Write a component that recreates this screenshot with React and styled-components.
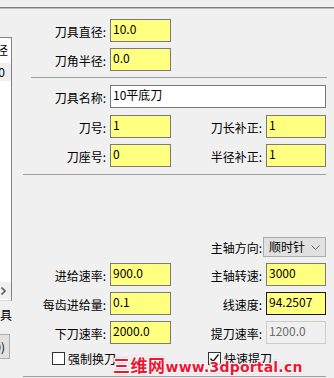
import React from 'react'
import styled, {createGlobalStyle} from 'styled-components'

const GlobalStyle = createGlobalStyle`
  body {
    margin: 0;
    background: #f0f0f0;
    font-family: "Noto Sans CJK SC", "Noto Sans", sans-serif;
    font-size: 12px;
  }
`

const leftFields = [
  {label: '进给速率:', value: '900.0'},
  {label: '每齿进给量:', value: '0.1'},
  {label: '下刀速率:', value: '2000.0'},
]

const rightFields = [
  {label: '主轴转速:', value: '3000'},
  {label: '线速度:', value: '94.2507', focus: true},
  {label: '提刀速率:', value: '1200.0', disabled: true},
]

const Chevron = ({dir = 'down'}) =>
  dir === 'down' ? (
    <svg width="9" height="5" viewBox="0 0 9 5">
      <polyline points="0.5,0.5 4.5,4.5 8.5,0.5" fill="none" stroke="#606060" strokeWidth="1" />
    </svg>
  ) : (
    <svg width="5" height="8" viewBox="0 0 5 8">
      <polyline points="0.5,0.5 4,4 0.5,7.5" fill="none" stroke="#606060" strokeWidth="1.6" />
    </svg>
  )

const Check = () => (
  <svg width="11" height="11" viewBox="0 0 11 11">
    <polyline points="1.5,5.5 4,8.5 9.5,1.5" fill="none" stroke="#111" strokeWidth="1.4" />
  </svg>
)

const App = () => {
  return (
    <Page>
      <GlobalStyle />
      <TopRule />
      <Body>
        <Side>
          <ListBox>
            <ListItem>刀具直径</ListItem>
            <ListItem selected>10.0</ListItem>
            <ListFill />
            <HScroll>
              <Chevron dir="right" />
            </HScroll>
          </ListBox>
          <SideLabel>刀具</SideLabel>
          <SideButton>(0)</SideButton>
        </Side>

        <Main>
          <Row $top={10}>
            <Label>刀具直径:</Label>
            <Field $w={61} defaultValue="10.0" />
          </Row>
          <Row $top={6}>
            <Label>刀角半径:</Label>
            <Field $w={61} defaultValue="0.0" />
          </Row>
          <Rule $top={6} $left={19} $right={7} />
          <Row $top={7}>
            <Label>刀具名称:</Label>
            <Field $w={216} $plain defaultValue="10平底刀" />
          </Row>
          <Row $top={7}>
            <Label>刀号:</Label>
            <Field $w={61} defaultValue="1" />
            <RightLabel>刀长补正:</RightLabel>
            <Field $w={60} defaultValue="1" />
          </Row>
          <Row $top={6}>
            <Label>刀座号:</Label>
            <Field $w={61} defaultValue="0" />
            <RightLabel>半径补正:</RightLabel>
            <Field $w={60} defaultValue="1" />
          </Row>
          <Rule $top={7} $left={11} $right={8} />

          <Row $top={62} $h={20}>
            <Gap />
            <SelectLabel>主轴方向:</SelectLabel>
            <Select>
              <span>顺时针</span>
              <Chevron />
            </Select>
          </Row>
          {leftFields.map((f, i) => (
            <Row key={f.label} $top={6}>
              <Label>{f.label}</Label>
              <Field $w={61} defaultValue={f.value} />
              <RightLabel>{rightFields[i].label}</RightLabel>
              <Field
                $w={60}
                $focus={rightFields[i].focus}
                $disabled={rightFields[i].disabled}
                defaultValue={rightFields[i].value}
              />
            </Row>
          ))}
          <CheckRow>
            <CheckItem>
              <Box />
              强制换刀
            </CheckItem>
            <CheckItem>
              <Box>
                <Check />
              </Box>
              快速提刀
            </CheckItem>
          </CheckRow>
          <Rule $top={11} $left={11} $right={8} />
        </Main>
      </Body>
      <Watermark>
        <WmCjk>三维网</WmCjk>
        <WmLatin>www.3dportal.cn</WmLatin>
      </Watermark>
    </Page>
  )
}

const Page = styled.div`
  position: relative;
  width: 334px;
  height: 378px;
  overflow: hidden;
  background: #f0f0f0;
  color: #000;
`

const TopRule = styled.div`
  margin-top: 7px;
  height: 0;
  border-top: 1px solid #7f7f7f;
  border-bottom: 1px solid #bcbcbc;
`

const Body = styled.div`
  display: flex;
`

const Side = styled.div`
  width: 12px;
  flex-shrink: 0;
  display: flex;
  flex-direction: column;
  overflow: hidden;
`

const ListBox = styled.div`
  margin-top: 28px;
  height: 262px;
  display: flex;
  flex-direction: column;
  background: #fff;
  border-top: 1px solid #828282;
  border-right: 1px solid #828282;
  border-bottom: 1px solid #d9d9d9;
`

const ListItem = styled.div`
  height: ${p => (p.selected ? 18 : 22)}px;
  margin-top: ${p => (p.selected ? 1 : 2)}px;
  padding-right: ${p => (p.selected ? 6 : 3)}px;
  background: ${p => (p.selected ? '#f0f0f0' : 'transparent')};
  line-height: ${p => (p.selected ? 18 : 20)}px;
  text-align: right;
  white-space: nowrap;
  display: flex;
  justify-content: flex-end;
`

const ListFill = styled.div`
  flex: 1;
`

const HScroll = styled.div`
  height: 17px;
  background: #f0f0f0;
  display: flex;
  align-items: center;
  padding-left: 1px;
  margin-bottom: 1px;
`

const SideLabel = styled.div`
  margin-top: 6px;
  height: 16px;
  line-height: 16px;
  display: flex;
  justify-content: flex-end;
  white-space: nowrap;
`

const SideButton = styled.div`
  margin-top: 11px;
  width: 10px;
  height: 25px;
  box-sizing: border-box;
  border: 1px solid #adadad;
  border-left: none;
  background: #e1e1e1;
  display: flex;
  align-items: center;
  justify-content: flex-end;
  padding-right: 4px;
  white-space: nowrap;
`

const Main = styled.div`
  flex: 1;
  display: flex;
  flex-direction: column;
`

const Row = styled.div`
  display: flex;
  align-items: center;
  height: ${p => p.$h || 23}px;
  margin-top: ${p => p.$top}px;
`

const Label = styled.div`
  width: 98px;
  box-sizing: border-box;
  padding: 1px 4px 0 0;
  text-align: right;
  white-space: nowrap;
`

const RightLabel = styled(Label)`
  width: 95px;
`

const SelectLabel = styled(Label)`
  width: 92px;
  padding-right: 1px;
`

const Gap = styled.div`
  width: 159px;
`

const Field = styled.input.attrs(() => ({readOnly: true, type: 'text'}))`
  box-sizing: border-box;
  width: ${p => p.$w}px;
  height: 23px;
  margin: 0;
  padding: 0 2px 5px;
  border: 1px solid
    ${p => (p.$focus ? '#1a1a1a' : p.$disabled ? '#cccccc' : '#7a7a7a')};
  background: ${p => (p.$disabled ? '#f0f0f0' : p.$plain ? '#ffffff' : '#ffff80')};
  color: ${p => (p.$disabled ? '#6d6d6d' : '#000')};
  font-family: "Noto Sans CJK SC", sans-serif;
  font-size: 12px;
  outline: none;
`

const Select = styled.div`
  box-sizing: border-box;
  width: 63px;
  height: 20px;
  border: 1px solid #adadad;
  background: #e1e1e1;
  display: flex;
  align-items: center;
  justify-content: space-between;
  padding: 0 5px 0 5px;
  line-height: 18px;
`

const Rule = styled.div`
  height: 1px;
  background: #a0a0a0;
  margin: ${p => p.$top}px ${p => p.$right}px 0 ${p => p.$left}px;
`

const CheckRow = styled.div`
  display: grid;
  grid-template-columns: 156px auto;
  margin-top: 8px;
  padding-left: 40px;
  height: 13px;
`

const CheckItem = styled.label`
  display: flex;
  align-items: center;
  gap: 3px;
  line-height: 13px;
  white-space: nowrap;
`

const Box = styled.span`
  box-sizing: border-box;
  width: 13px;
  height: 13px;
  border: 1px solid #333;
  background: #fff;
  display: flex;
  align-items: center;
  justify-content: center;
`

const Watermark = styled.div`
  position: absolute;
  left: 113px;
  top: 357px;
  display: flex;
  align-items: baseline;
  color: #ee1533;
  font-weight: bold;
  line-height: 16px;
  white-space: nowrap;
  text-shadow: 1px 0 #fff, -1px 0 #fff, 0 1px #fff, 0 -1px #fff,
    1px 1px #fff, -1px -1px #fff, 1px -1px #fff, -1px 1px #fff,
    0 0 3px rgba(240, 80, 100, 0.8);
`

const WmCjk = styled.span`
  font-family: "Noto Sans CJK SC", sans-serif;
  font-size: 17px;
  letter-spacing: 0.5px;
`

const WmLatin = styled.span`
  font-family: "DejaVu Sans", sans-serif;
  font-size: 14px;
  letter-spacing: 0.2px;
`

export default App
